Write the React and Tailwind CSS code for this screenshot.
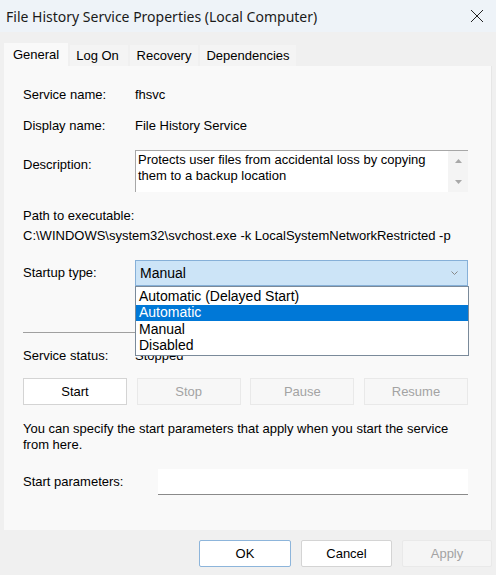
import { useState } from 'react';

const labelCls = 'w-[112px] shrink-0';

const ServiceButton = ({ children, disabled }) => (
  <button
    className={
      disabled
        ? 'h-[27px] w-[104px] border border-[#e9e9e9] bg-[#f7f7f7] text-[#a3a3a3]'
        : 'h-[27px] w-[104px] border border-[#d4d4d4] bg-white text-black'
    }
  >
    {children}
  </button>
);

const ScrollArrow = ({ up }) => (
  <svg width="7" height="4" viewBox="0 0 7 4">
    <path d={up ? 'M0 4 L3.5 0 L7 4 Z' : 'M0 0 L3.5 4 L7 0 Z'} fill="#a8a8a8" />
  </svg>
);

export default function App() {
  const [startup] = useState('Manual');
  const options = ['Automatic (Delayed Start)', 'Automatic', 'Manual', 'Disabled'];

  return (
    <div className="w-[496px] h-[575px] bg-[#f0f0f0] flex flex-col font-['Liberation_Sans',Arial,sans-serif] text-[13px] text-black overflow-hidden">
      {/* Title bar */}
      <div className="h-[32px] bg-[#eef3f8] flex items-center justify-between pl-[6px] pr-[10px]">
        <span className="font-['Noto_Sans',sans-serif] text-[14px] text-[#1a1a1a]">
          File History Service Properties (Local Computer)
        </span>
        <svg width="14" height="14" viewBox="0 0 14 14" className="mr-[2px]">
          <path d="M1 1 L13 13 M13 1 L1 13" stroke="#222" strokeWidth="1" />
        </svg>
      </div>

      {/* Tabs */}
      <div className="flex items-end pl-[4px] mt-[11px] h-[23px]">
        <div className="h-[23px] w-[64px] bg-[#f9f9f9] flex items-center justify-center">General</div>
        <div className="h-[21px] w-[58px] ml-[2px] bg-[#f4f4f4] flex items-center justify-center pr-[3px]">Log On</div>
        <div className="h-[21px] w-[68px] ml-[2px] bg-[#f4f4f4] flex items-center justify-center">Recovery</div>
        <div className="h-[21px] w-[96px] ml-[2px] bg-[#f4f4f4] flex items-center justify-center">Dependencies</div>
      </div>

      {/* General page */}
      <div className="mx-[4px] h-[464px] bg-[#f9f9f9] border-r border-[#e6e6e6] pl-[19px] pr-[23px] flex flex-col">
        <div className="flex h-[16px] items-center mt-[21px]">
          <span className={labelCls}>Service name:</span>
          <span>fhsvc</span>
        </div>
        <div className="flex h-[16px] items-center mt-[15px]">
          <span className={labelCls}>Display name:</span>
          <span>File History Service</span>
        </div>
        <div className="flex mt-[16px]">
          <span className={`${labelCls} pt-[5px]`}>Description:</span>
          <div className="flex-1 h-[42px] bg-white border-t border-l border-[#a7a7a7] flex">
            <div className="flex-1 pl-[2px] pt-[1px] leading-[16px]">
              Protects user files from accidental loss by copying them to a backup location
            </div>
            <div className="w-[20px] bg-[#f4f4f4] flex flex-col items-center justify-between py-[8px]">
              <ScrollArrow up />
              <ScrollArrow />
            </div>
          </div>
        </div>
        <div className="h-[16px] flex items-center mt-[16px]">Path to executable:</div>
        <div className="h-[16px] flex items-center mt-[4px]">
          C:\WINDOWS\system32\svchost.exe -k LocalSystemNetworkRestricted -p
        </div>
        <div className="flex items-center mt-[16px]">
          <span className={labelCls}>Startup type:</span>
          <div className="relative flex-1">
            <div className="h-[26px] bg-[#cce4f7] border border-[#86b0d8] flex items-center justify-between pl-[4px] pr-[9px] text-[14px]">
              <span>{startup}</span>
              <svg width="7" height="4" viewBox="0 0 7 4">
                <path d="M0.5 0.5 L3.5 3.5 L6.5 0.5" stroke="#888" fill="none" strokeWidth="1" />
              </svg>
            </div>
            {/* Open dropdown list */}
            <div className="absolute left-0 right-[-1px] top-[26px] bg-white border border-[#7a8a9a] py-[1px] text-[14px] z-10">
              {options.map((opt) => (
                <div
                  key={opt}
                  className={
                    opt === 'Automatic'
                      ? 'h-[16.5px] flex items-center pl-[3px] bg-[#0078d7] text-white'
                      : 'h-[16.5px] flex items-center pl-[3px]'
                  }
                >
                  {opt}
                </div>
              ))}
            </div>
          </div>
        </div>
        <div className="h-[1px] bg-[#a0a0a0] mt-[46px] mr-[-1px]" />
        <div className="flex h-[16px] items-center mt-[15px]">
          <span className={labelCls}>Service status:</span>
          <span>Stopped</span>
        </div>
        <div className="flex justify-between mt-[14px]">
          <ServiceButton>Start</ServiceButton>
          <ServiceButton disabled>Stop</ServiceButton>
          <ServiceButton disabled>Pause</ServiceButton>
          <ServiceButton disabled>Resume</ServiceButton>
        </div>
        <p className="mt-[16px] leading-[16px]">
          You can specify the start parameters that apply when you start the service from here.
        </p>
        <div className="flex items-center mt-[16px]">
          <span className="w-[135px] shrink-0">Start parameters:</span>
          <div className="flex-1 h-[26px] bg-white border-b border-[#8a8a8a]" />
        </div>
      </div>

      {/* Dialog buttons */}
      <div className="flex justify-end gap-[10px] pr-[4px] mt-[10px]">
        <button className="h-[27px] w-[92px] bg-white border border-[#8db5db] rounded-[2px]">OK</button>
        <button className="h-[27px] w-[91px] bg-white border border-[#d4d4d4] rounded-[2px]">Cancel</button>
        <button className="h-[27px] w-[90px] bg-[#f5f5f5] border border-[#e9e9e9] rounded-[2px] text-[#a3a3a3]">
          Apply
        </button>
      </div>
    </div>
  );
}
